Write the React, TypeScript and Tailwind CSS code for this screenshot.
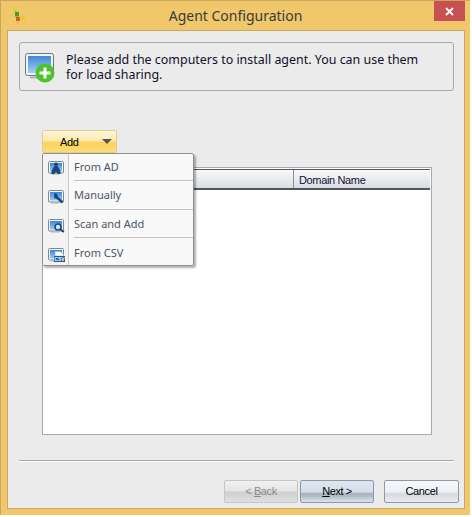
function Icon({ kind }: { kind: string }) {
  return (
    <svg width="19" height="17" viewBox="0 0 19 17" className="shrink-0">
      <defs>
        <linearGradient id="menuScreen" x1="0" y1="0" x2="0" y2="1">
          <stop offset="0" stopColor="#3c86d6" />
          <stop offset="1" stopColor="#9ccbf3" />
        </linearGradient>
      </defs>
      <rect x="0.5" y="0.5" width="15" height="11.5" rx="1" fill="#f2f4f6" stroke="#7d8996" />
      <rect x="2" y="2" width="12" height="8.500" fill="url(#menuScreen)" />
      <path d="M3 13h8" stroke="#aab2ba" strokeWidth="1" />
      {kind === "ad" && (
        <path d="M8 1.500a1.800 1.800 0 0 1 1.400 3l3.100 5.500v3H9.500l-1.500-2-1.500 2H3.500v-3l3.100-5.500a1.800 1.800 0 0 1 1.400-3z" fill="#17497f" />
      )}
      {kind === "manual" && (
        <path d="M6 4l1.500-1 2 1.500.5 2.200 5.500 4.800-1.700 2-5.300-4.800-2.300-.4z" fill="#17497f" />
      )}
      {kind === "scan" && (
        <>
          <circle cx="10" cy="8" r="3" fill="#cfe6f7" stroke="#17497f" strokeWidth="1.500" />
          <path d="M12.300 10.200l3.500 2.800" stroke="#17497f" strokeWidth="2" />
        </>
      )}
      {kind === "csv" && (
        <>
          <path d="M7 3.500h5.500l3 3V8H7z" fill="#fff" stroke="#8aa0b4" strokeWidth="0.500" />
          <rect x="6" y="8" width="11" height="6" fill="#1c5c9c" />
          <text x="11.500" y="13" textAnchor="middle" fontSize="5" fontWeight="700" fill="#fff" fontFamily="Liberation Sans, sans-serif">
            CSV
          </text>
        </>
      )}
    </svg>
  );
}

const items = [
  { k: "ad", t: "From AD", h: "h-[27px]" },
  { k: "manual", t: "Manually", h: "h-[29px] pt-[2px]" },
  { k: "scan", t: "Scan and Add", h: "h-[29px] pt-[2px]" },
  { k: "csv", t: "From CSV", h: "h-[27px] pt-[3px]" },
];

export default function App() {
  return (
    <div className="min-h-[517px] bg-white">
      <div className="w-[470px] h-[515px] flex flex-col bg-[#f0c76a] border-t border-l border-[#c9a75e] text-[#1e1e1e] font-['Noto_Sans',sans-serif]">
        <div className="h-[29px] shrink-0 flex items-center relative">
          <svg width="14" height="19" viewBox="0 0 14 19" className="ml-[11px] mt-[-1px] shrink-0">
            <circle cx="3" cy="3" r="2" fill="#cfdc20" />
            <path d="M3.500 4.500l1 2" stroke="#8aa030" />
            <rect x="3" y="6" width="4" height="4.500" fill="#3fa02c" />
            <rect x="4" y="11" width="4" height="4" fill="#d9601c" />
            <path d="M6 15v2.500" stroke="#e8a070" />
            <circle cx="11" cy="12" r="2" fill="#f5c800" />
          </svg>
          <div className="flex-1 text-center text-[14px] text-[#3a3a3a] pr-[25px]">Agent Configuration</div>
          <div className="absolute right-[5px] top-0 w-[31px] h-[20px] bg-[#c75050] flex items-center justify-center">
            <svg width="9" height="9" viewBox="0 0 9 9">
              <path d="M1 1l7 7M8 1l-7 7" stroke="#fff" strokeWidth="1.800" />
            </svg>
          </div>
        </div>
        <div className="ml-[6px] mr-[5px] mb-[6px] flex-1 bg-[#ebebeb] border border-[#c9a75e] pl-[11px] pr-[10px] pt-[11px] flex flex-col relative">
          <div className="h-[49px] border border-[#a8a8a8] rounded-[3px] flex items-center pl-[5px] gap-[11px] shrink-0">
            <svg width="30" height="31" viewBox="0 0 30 31" className="shrink-0 mt-[3px]">
              <defs>
                <linearGradient id="bigScreen" x1="0" y1="0" x2="0" y2="1">
                  <stop offset="0" stopColor="#3f87d8" />
                  <stop offset="1" stopColor="#a4d0f5" />
                </linearGradient>
              </defs>
              <rect x="0.500" y="0.500" width="28" height="22" rx="2" fill="#f2f3f5" stroke="#6c7784" />
              <rect x="3" y="3" width="23" height="17" fill="url(#bigScreen)" />
              <path d="M5 24.500h13" stroke="#a9afb5" strokeWidth="2" />
              <circle cx="20" cy="20" r="9.500" fill="#4cc22c" />
              <path d="M20 14.500v11M14.500 20h11" stroke="#fff" strokeWidth="3" />
            </svg>
            <div className="text-[12.450px] leading-[15px] text-[#101028]">
              Please add the computers to install agent. You can use them
              <br />
              for load sharing.
            </div>
          </div>
          <div className="mt-[39px] ml-[23px] w-[75px] h-[23px] rounded-[2px] border border-[#e6cc88] flex items-center bg-[linear-gradient(#fdf6dc_0%,#fdeab0_45%,#fdd25c_55%,#fcdc78_100%)] shrink-0">
            <span className="ml-[17px] pt-[1px] font-['Liberation_Sans',sans-serif] text-[11px] tracking-[-0.300px] text-black">Add</span>
            <span className="ml-[23px] w-0 h-0 border-x-[5px] border-x-transparent border-t-[5px] border-t-[#555]" />
          </div>
          <div className="mt-[14px] ml-[23px] w-[390px] h-[268px] bg-white border border-[#a8a8a8] shrink-0 pr-[1px] pt-[1px]">
            <div className="h-[21px] flex border-t border-b-2 border-t-[#4e5560] border-b-[#4e5560] bg-[linear-gradient(#f8f8fa,#dcdde2)]">
              <div className="w-[251px] border-r border-[#8a8f98]" />
              <div className="pl-[5px] font-['Liberation_Sans',sans-serif] text-[11px] tracking-[-0.350px] leading-[20px] text-[#10103a]">Domain Name</div>
            </div>
          </div>
          <div className="absolute left-[34px] top-[122px] w-[152px] h-[113px] bg-[#f9f9f9] border border-[#8f8f8f] rounded-[2px] shadow-[2px_2px_2px_rgba(0,0,0,0.3)] flex">
            <div className="w-[26px] shrink-0 border-r border-[#c8c8c8] bg-[#f3f3f3] flex flex-col pl-[5px] pt-[7px] gap-[12px]">
              {items.map((i) => (
                <Icon key={i.k} kind={i.k} />
              ))}
            </div>
            <div className="flex-1 flex flex-col ml-[5px]">
              {items.map((i, n) => (
                <div
                  key={i.k}
                  className={`${i.h} flex items-center text-[11px] text-[#4a5568] ${n < 3 ? "border-b border-[#c4c4c4]" : ""}`}
                >
                  {i.t}
                </div>
              ))}
            </div>
          </div>
          <div className="mt-[25px] border-t border-b border-t-[#a8a8a8] border-b-white h-[2px] shrink-0" />
          <div className="mt-[18px] flex items-center shrink-0 pl-[205px] font-['Liberation_Sans',sans-serif] text-[11px] tracking-[-0.400px]">
            <button className="shrink-0 w-[74px] h-[23px] rounded-[2px] border border-[#c6c6c6] text-[#8a8a8a] bg-[linear-gradient(#f0f0f0_0%,#e6e6e6_45%,#cfcfcf_55%,#e0e0e0_100%)]">
              &lt; <span className="underline">B</span>ack
            </button>
            <button className="shrink-0 ml-[2px] w-[74px] h-[23px] rounded-[2px] border border-[#8c9aa8] text-black bg-[linear-gradient(#dfe6ee_0%,#d6dfe9_50%,#a4b0be_62%,#dbe3ec_100%)]">
              <span className="underline">N</span>ext &gt;
            </button>
            <button className="shrink-0 ml-[10px] w-[75px] h-[23px] rounded-[2px] border border-[#8c9aa8] text-black bg-[linear-gradient(#f6f8fa_0%,#eef1f4_50%,#d3d9df_62%,#e9edf2_100%)]">
              Cancel
            </button>
          </div>
        </div>
      </div>
    </div>
  );
}
